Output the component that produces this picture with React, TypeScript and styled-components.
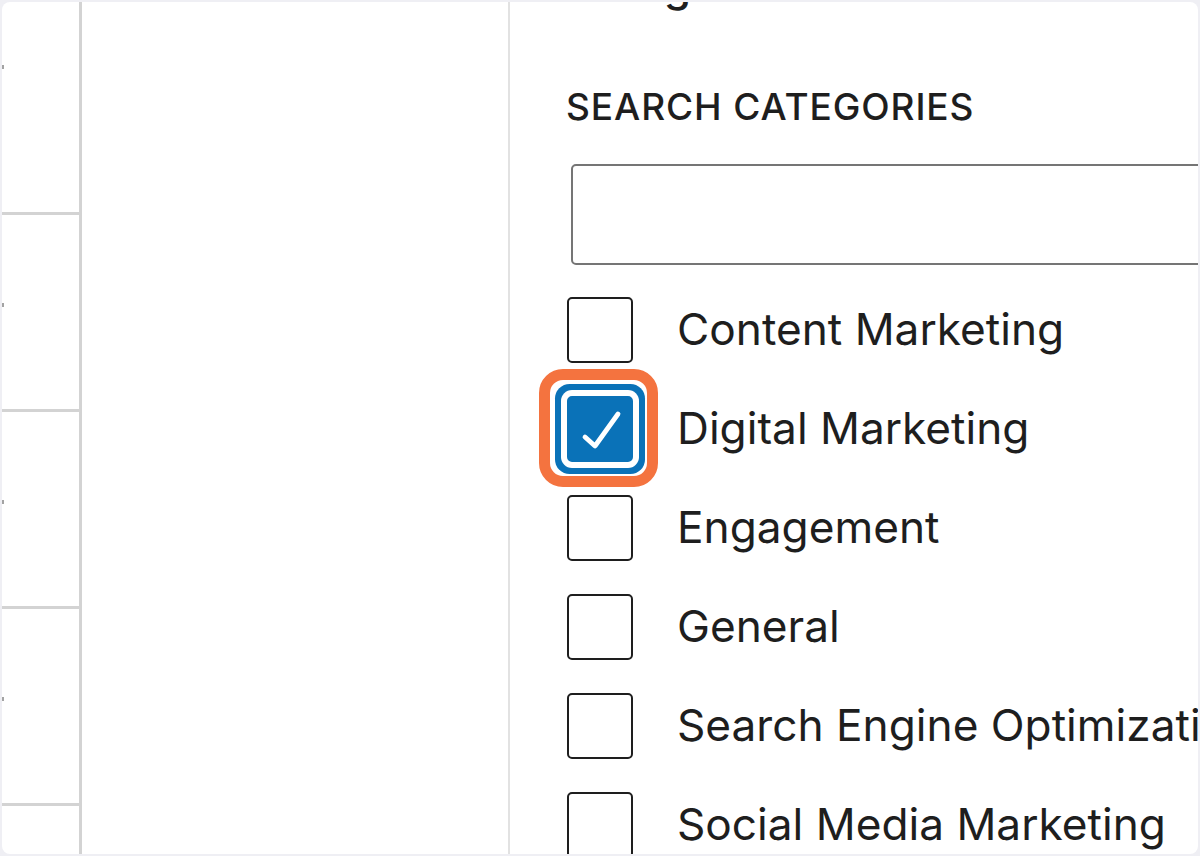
import React from "react";
import styled, { createGlobalStyle } from "styled-components";

const GlobalStyle = createGlobalStyle`
  html, body {
    margin: 0;
    padding: 0;
    background: #efeff4;
  }
  body {
    font-family: Inter, "Noto Sans", "Liberation Sans", sans-serif;
    color: #1e1e1e;
  }
`;

const Frame = styled.div`
  width: 1200px;
  height: 856px;
  padding: 2px;
  box-sizing: border-box;
  background: #efeff4;
`;

const Card = styled.div`
  height: 100%;
  background: #ffffff;
  border-radius: 8px;
  overflow: hidden;
  display: grid;
  grid-template-columns: 80px 428px 1fr;
`;

const TableColumn = styled.div`
  display: flex;
  flex-direction: column;
  border-right: 3px solid #d3d3d3;
  box-sizing: border-box;
`;

const TableRow = styled.div<{ $height?: number; $offset: number; $last?: boolean }>`
  flex: ${(p) => (p.$last ? "1" : "none")};
  height: ${(p) => (p.$height ? `${p.$height}px` : "auto")};
  padding-top: ${(p) => p.$offset}px;
  border-bottom: ${(p) => (p.$last ? "none" : "3px solid #d3d3d3")};
  box-sizing: border-box;
`;

const Speck = styled.span`
  display: block;
  width: 2px;
  height: 4px;
  background: #a3a3a3;
`;

const ContentColumn = styled.div`
  border-right: 2px solid #e2e2e2;
`;

const Sidebar = styled.div`
  display: flex;
  flex-direction: column;
  padding-left: 56px;
  min-width: 0;
`;

const PanelTitle = styled.h2`
  margin: -43px 0 0 0;
  font-size: 44px;
  line-height: 53px;
  font-weight: 500;
  color: #1e1e1e;
`;

const SectionLabel = styled.h3`
  margin: 73px 0 0 0;
  font-size: 37px;
  line-height: 44px;
  font-weight: 500;
  letter-spacing: 0.9px;
  text-transform: uppercase;
  color: #1e1e1e;
  white-space: nowrap;
`;

const SearchInput = styled.input`
  display: block;
  margin: 35px 0 0 5px;
  width: 700px;
  height: 101px;
  border: 2px solid #757575;
  border-radius: 5px;
  box-sizing: border-box;
  background: #fff;
  font-size: 44px;
  font-family: inherit;
  outline: none;
  flex: none;
`;

const CheckList = styled.div`
  display: flex;
  flex-direction: column;
  gap: 33px;
  margin-top: 32px;
`;

const CheckRow = styled.label`
  display: flex;
  align-items: center;
  gap: 44px;
  padding-left: 1px;
  white-space: nowrap;
`;

const BoxWrap = styled.span`
  position: relative;
  display: inline-flex;
  flex: none;
`;

const Box = styled.span<{ $checked?: boolean }>`
  width: 66px;
  height: 66px;
  box-sizing: border-box;
  border-radius: 5px;
  border: 2.5px solid ${(p) => (p.$checked ? "#0a72b8" : "#1e1e1e")};
  background: ${(p) => (p.$checked ? "#0a72b8" : "#ffffff")};
  box-shadow: ${(p) =>
    p.$checked ? "0 0 0 6px #ffffff, 0 0 0 12px #0a72b8" : "none"};
  display: flex;
  align-items: center;
  justify-content: center;
`;

const Highlight = styled.span`
  position: absolute;
  inset: -27px -25px -25px -28px;
  border: 11px solid #f4733f;
  border-radius: 24px;
  pointer-events: none;
`;

const LabelText = styled.span`
  font-size: 44.2px;
  line-height: 1.2;
  color: #1e1e1e;
`;

const CheckMark = () => (
  <svg width="66" height="66" viewBox="0 0 66 66" style={{ position: "absolute", inset: 0 }}>
    <polyline
      points="18,41 28,50 51,18"
      fill="none"
      stroke="#ffffff"
      strokeWidth="4.8"
      strokeLinecap="round"
      strokeLinejoin="round"
    />
  </svg>
);

const categories = [
  { name: "Content Marketing", checked: false },
  { name: "Digital Marketing", checked: true },
  { name: "Engagement", checked: false },
  { name: "General", checked: false },
  { name: "Search Engine Optimization", checked: false },
  { name: "Social Media Marketing", checked: false },
];

export default function App() {
  return (
    <>
      <GlobalStyle />
      <Frame>
        <Card>
          <TableColumn>
            <TableRow $height={213} $offset={63}>
              <Speck />
            </TableRow>
            <TableRow $height={197} $offset={88}>
              <Speck />
            </TableRow>
            <TableRow $height={197} $offset={88}>
              <Speck />
            </TableRow>
            <TableRow $height={197} $offset={88}>
              <Speck />
            </TableRow>
            <TableRow $offset={0} $last />
          </TableColumn>
          <ContentColumn />
          <Sidebar>
            <PanelTitle>Categories</PanelTitle>
            <SectionLabel>Search Categories</SectionLabel>
            <SearchInput type="search" aria-label="Search Categories" />
            <CheckList>
              {categories.map((c) => (
                <CheckRow key={c.name}>
                  <BoxWrap>
                    <Box $checked={c.checked} role="checkbox" aria-checked={c.checked}>
                      {c.checked && <CheckMark />}
                    </Box>
                    {c.checked && <Highlight />}
                  </BoxWrap>
                  <LabelText>{c.name}</LabelText>
                </CheckRow>
              ))}
            </CheckList>
          </Sidebar>
        </Card>
      </Frame>
    </>
  );
}
